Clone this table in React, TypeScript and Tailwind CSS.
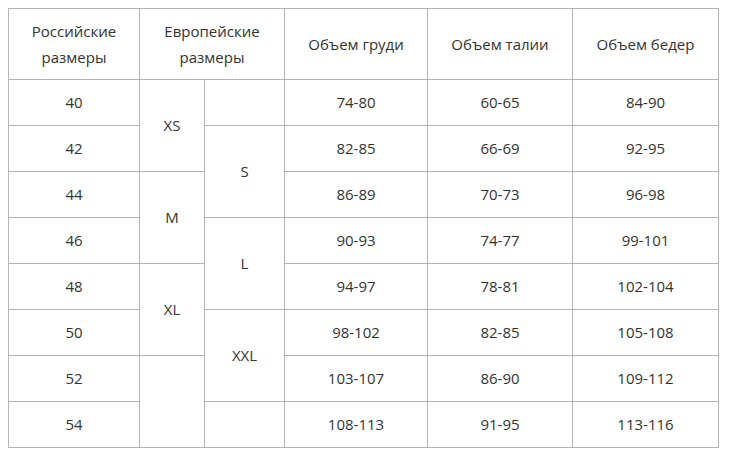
const rows = [
  { ru: "40", chest: "74-80", waist: "60-65", hips: "84-90" },
  { ru: "42", chest: "82-85", waist: "66-69", hips: "92-95" },
  { ru: "44", chest: "86-89", waist: "70-73", hips: "96-98" },
  { ru: "46", chest: "90-93", waist: "74-77", hips: "99-101" },
  { ru: "48", chest: "94-97", waist: "78-81", hips: "102-104" },
  { ru: "50", chest: "98-102", waist: "82-85", hips: "105-108" },
  { ru: "52", chest: "103-107", waist: "86-90", hips: "109-112" },
  { ru: "54", chest: "108-113", waist: "91-95", hips: "113-116" },
];

// spans for the two EU size columns, keyed by starting row index
const euA: Record<number, { label: string; span: number }> = {
  0: { label: "XS", span: 2 },
  2: { label: "M", span: 2 },
  4: { label: "XL", span: 2 },
  6: { label: "", span: 2 },
};
const euB: Record<number, { label: string; span: number }> = {
  0: { label: "", span: 1 },
  1: { label: "S", span: 2 },
  3: { label: "L", span: 2 },
  5: { label: "XXL", span: 2 },
  7: { label: "", span: 1 },
};

const cell = "border border-[#b3b3b3] text-center align-middle p-0";

export default function App() {
  return (
    <div className="min-h-[472px] bg-white pl-2 pt-2" style={{ fontFamily: "'Open Sans', 'Noto Sans', sans-serif" }}>
      <table className="table-fixed border-collapse text-[15px] text-[#333]">
        <colgroup>
          <col className="w-[131px]" />
          <col className="w-[65px]" />
          <col className="w-[80px]" />
          <col className="w-[143px]" />
          <col className="w-[145px]" />
          <col className="w-[146px]" />
        </colgroup>
        <thead>
          <tr className="h-[71px]">
            <th className={`${cell} font-normal leading-[26px]`}>
              Российские
              <br />
              размеры
            </th>
            <th colSpan={2} className={`${cell} font-normal leading-[26px]`}>
              Европейские
              <br />
              размеры
            </th>
            <th className={`${cell} font-normal`}>Объем груди</th>
            <th className={`${cell} font-normal`}>Объем талии</th>
            <th className={`${cell} font-normal`}>Объем бедер</th>
          </tr>
        </thead>
        <tbody>
          {rows.map((row, i) => (
            <tr key={row.ru} className="h-[46px]">
              <td className={cell}>{row.ru}</td>
              {euA[i] && (
                <td rowSpan={euA[i].span} className={cell}>
                  {euA[i].label}
                </td>
              )}
              {euB[i] && (
                <td rowSpan={euB[i].span} className={cell}>
                  {euB[i].label}
                </td>
              )}
              <td className={cell}>{row.chest}</td>
              <td className={cell}>{row.waist}</td>
              <td className={cell}>{row.hips}</td>
            </tr>
          ))}
        </tbody>
      </table>
    </div>
  );
}
